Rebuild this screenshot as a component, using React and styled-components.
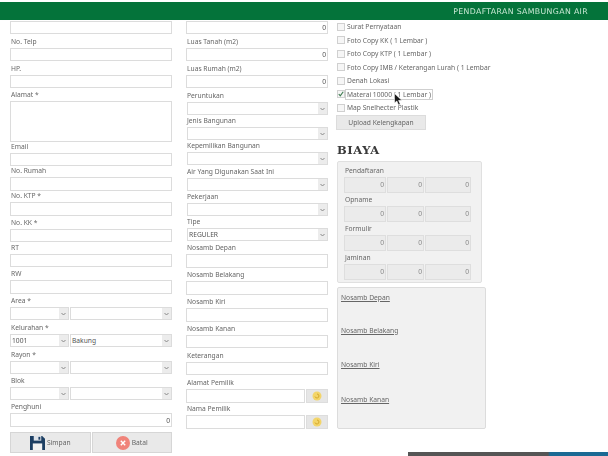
import React from "react";
import styled, { createGlobalStyle } from "styled-components";

const GlobalStyle = createGlobalStyle`
  html, body {
    margin: 0;
    padding: 0;
    background: #fff;
    overflow: hidden;
  }
  body {
    font-family: "Noto Sans", "Liberation Sans", sans-serif;
    font-size: 6.7px;
    color: #666;
  }
`;

const Page = styled.div`
  position: relative;
  width: 608px;
  height: 456px;
  overflow: hidden;
  padding-top: 2px;
  box-sizing: border-box;
  filter: blur(0.45px);
`;
const Header = styled.div`
  display: flex;
  justify-content: flex-end;
  align-items: center;
  height: 18px;
  padding-right: 20px;
  background: #04733a;
  color: #c9e8d4;
  font-family: "DejaVu Sans", sans-serif;
  font-size: 7.8px;
  letter-spacing: 0.35px;
`;
const Columns = styled.div`
  display: grid;
  grid-template-columns: 162px 142px 1fr;
  column-gap: 14px;
  padding-left: 10px;
`;
const FormColumn = styled.div`
  display: flex;
  flex-direction: column;
`;
const RightColumn = styled.div`
  display: flex;
  flex-direction: column;
  margin-left: -6px;
`;
const Field = styled.div`
  display: flex;
  flex-direction: column;
  justify-content: flex-end;
  height: ${(p) => p.$h}px;
`;
const Label = styled.div`
  height: 9px;
  line-height: 9px;
  margin-bottom: 2px;
  padding-left: 1px;
  white-space: nowrap;
`;
const Input = styled.div`
  display: flex;
  align-items: center;
  justify-content: ${(p) => (p.$num ? "flex-end" : "flex-start")};
  height: ${(p) => p.$tall || 13}px;
  box-sizing: border-box;
  padding: 0 1px;
  background: #fff;
  border: 1px solid #dcdcdc;
  color: #555;
`;
const LookupInput = styled(Input)`
  flex: 1;
  height: 14px;
`;
const SelectRow = styled.div`
  display: flex;
  height: 13px;
`;
const Select = styled.div`
  display: flex;
  flex: ${(p) => (p.$w ? `0 0 ${p.$w}px` : "1")};
  margin-left: ${(p) => (p.$w ? 0 : 1)}px;
  box-sizing: border-box;
  border: 1px solid #dcdcdc;
  background: #fff;
`;
const SelectText = styled.div`
  flex: 1;
  padding-left: 1px;
  line-height: 11px;
  color: #555;
`;
const Arrow = styled.div`
  display: flex;
  align-items: center;
  justify-content: center;
  width: 9px;
  background: #ececec;
`;
const LookupRow = styled.div`
  display: flex;
  gap: 1px;
  height: 14px;
`;
const LookupButton = styled.div`
  display: flex;
  align-items: center;
  justify-content: center;
  width: 22px;
  background: #e6e6e6;
  border: 1px solid #ddd;
  box-sizing: border-box;
`;
const ActionBar = styled.div`
  display: flex;
  gap: 1px;
  margin-top: 5px;
  height: 21px;
`;
const ActionButton = styled.div`
  display: flex;
  flex: 1;
  align-items: center;
  justify-content: center;
  gap: 2px;
  box-sizing: border-box;
  background: #e9e9e9;
  border: 1px solid #d6d6d6;
  color: #666;
`;
const CheckRow = styled.div`
  display: flex;
  align-items: center;
  height: 13.5px;
  white-space: nowrap;
`;
const CheckBox = styled.div`
  display: flex;
  align-items: center;
  justify-content: center;
  width: 8px;
  height: 8px;
  margin-left: 1px;
  box-sizing: border-box;
  border: 1px solid #d0d0d0;
  background: #f6f6f6;
`;
const CheckText = styled.span`
  padding: 0 1px;
  border: 1px solid ${(p) => (p.$focus ? "#cfcfcf" : "transparent")};
`;
const UploadButton = styled.div`
  display: flex;
  align-items: center;
  justify-content: center;
  width: 90px;
  height: 15px;
  box-sizing: border-box;
  background: #e9e9e9;
  border: 1px solid #dcdcdc;
`;
const Title = styled.div`
  margin: 13px 0 4px 1px;
  height: 14px;
  line-height: 14px;
  font-family: "DejaVu Serif", "Liberation Serif", serif;
  font-weight: 700;
  font-size: 11.5px;
  letter-spacing: 0.6px;
  color: #3a3a3a;
`;
const CostPanel = styled.div`
  width: 145px;
  height: 122px;
  margin-left: 1px;
  padding: 3px 0 0 6px;
  box-sizing: border-box;
  border: 1px solid #e0e0e0;
  border-radius: 2px;
  background: #f1f1f1;
`;
const CostGroup = styled.div`
  height: ${(p) => p.$h}px;
  display: flex;
  flex-direction: column;
  justify-content: flex-end;
`;
const CostRow = styled.div`
  display: grid;
  grid-template-columns: 42px 37px 46px;
  gap: 1px;
`;
const CostBox = styled.div`
  display: flex;
  align-items: center;
  justify-content: flex-end;
  height: 16px;
  padding-right: 1px;
  box-sizing: border-box;
  border: 1px solid #dedede;
  background: #ebebeb;
  color: #888;
`;
const LinkPanel = styled.div`
  display: flex;
  flex-direction: column;
  width: 149px;
  height: 142px;
  margin: 4px 0 0 1px;
  padding: 5px 0 0 3px;
  box-sizing: border-box;
  border: 1px solid #dcdcdc;
  border-radius: 2px;
  background: #f1f1f1;
`;
const PhotoLink = styled.a`
  height: ${(p) => p.$h}px;
  color: #666;
  text-decoration: underline;
`;
const Cursor = styled.svg`
  position: absolute;
  left: 394px;
  top: 93px;
`;
const Taskbar = styled.div`
  position: absolute;
  right: 0;
  bottom: 0;
  width: 200px;
  height: 4px;
  background: linear-gradient(to right, #555 0, #555 70%, #1b6a94 71%, #1b6a94 100%);
`;

const ArrowIcon = () => (
  <svg width="5" height="4" viewBox="0 0 5 4">
    <path d="M0.5 1 L2.5 3 L4.5 1" fill="none" stroke="#888" strokeWidth="1" />
  </svg>
);

const Dropdown = ({ w, value }) => (
  <Select $w={w}>
    <SelectText>{value}</SelectText>
    <Arrow>
      <ArrowIcon />
    </Arrow>
  </Select>
);

const SearchIcon = () => (
  <svg width="10" height="10" viewBox="0 0 10 10">
    <circle cx="5" cy="5" r="4.5" fill="#f3d56a" />
    <path d="M3 5.5 A2 2 0 1 0 5 3" fill="none" stroke="#d6a92c" strokeWidth="1" />
  </svg>
);

const SaveIcon = () => (
  <svg width="15" height="15" viewBox="0 0 16 16">
    <path d="M0 1 H13 L16 4 V16 H0 Z" fill="#1d3f63" />
    <rect x="4" y="1" width="8" height="5" fill="#dfe4ea" />
    <rect x="9" y="2" width="2" height="3" fill="#1d3f63" />
    <rect x="3" y="9" width="10" height="7" fill="#f2f2f2" />
  </svg>
);

const CancelIcon = () => (
  <svg width="14" height="14" viewBox="0 0 14 14">
    <circle cx="7" cy="7" r="7" fill="#f0837a" />
    <path d="M4.8 4.8 L9.2 9.2 M9.2 4.8 L4.8 9.2" stroke="#fff" strokeWidth="1.4" />
  </svg>
);

const leftFields = [
  { label: "No. Telp", h: 27 },
  { label: "HP.", h: 27 },
  { label: "Alamat *", h: 54, tall: 41 },
  { label: "Email", h: 24 },
  { label: "No. Rumah", h: 25, tall: 14 },
  { label: "No. KTP *", h: 25, tall: 14 },
  { label: "No. KK *", h: 26 },
  { label: "RT", h: 25 },
  { label: "RW", h: 27, tall: 14 },
];

const leftSelects = [
  { label: "Area *", h: 26 },
  { label: "Kelurahan *", h: 27, code: "1001", name: "Bakung" },
  { label: "Rayon *", h: 27 },
  { label: "Blok", h: 26 },
];

const midTop = [
  { label: "Luas Tanah (m2)", h: 27 },
  { label: "Luas Rumah (m2)", h: 27 },
];

const midSelects = [
  { label: "Peruntukan", h: 27 },
  { label: "Jenis Bangunan", h: 25 },
  { label: "Kepemilikan Bangunan", h: 25 },
  { label: "Air Yang Digunakan Saat Ini", h: 26 },
  { label: "Pekerjaan", h: 25 },
  { label: "Tipe", h: 25, value: "REGULER" },
];

const midInputs = [
  { label: "Nosamb Depan", h: 27, tall: 14 },
  { label: "Nosamb Belakang", h: 27, tall: 14 },
  { label: "Nosamb Kiri", h: 27, tall: 14 },
  { label: "Nosamb Kanan", h: 26 },
  { label: "Keterangan", h: 27 },
];

const checks = [
  "Surat Pernyataan",
  "Foto Copy KK ( 1 Lembar )",
  "Foto Copy KTP ( 1 Lembar )",
  "Foto Copy IMB / Keterangan Lurah ( 1 Lembar",
  "Denah Lokasi",
  "Materai 10000 ( 1 Lembar )",
  "Map Snelhecter Plastik",
];

const costs = [
  { label: "Pendaftaran", h: 28 },
  { label: "Opname", h: 29 },
  { label: "Formulir", h: 29 },
  { label: "Jaminan", h: 29 },
];

const links = [
  { label: "Nosamb Depan", h: 33 },
  { label: "Nosamb Belakang", h: 34 },
  { label: "Nosamb Kiri", h: 35 },
  { label: "Nosamb Kanan", h: 30 },
];

export default function App() {
  return (
    <Page>
      <GlobalStyle />
      <Header>PENDAFTARAN SAMBUNGAN AIR</Header>
      <Columns>
        <FormColumn>
          <Field $h={14}>
            <Input />
          </Field>
          {leftFields.map((f) => (
            <Field key={f.label} $h={f.h}>
              <Label>{f.label}</Label>
              <Input $tall={f.tall} />
            </Field>
          ))}
          {leftSelects.map((f) => (
            <Field key={f.label} $h={f.h}>
              <Label>{f.label}</Label>
              <SelectRow>
                <Dropdown w={59} value={f.code} />
                <Dropdown value={f.name} />
              </SelectRow>
            </Field>
          ))}
          <Field $h={27}>
            <Label>Penghuni</Label>
            <Input $num $tall={14}>0</Input>
          </Field>
          <ActionBar>
            <ActionButton>
              <SaveIcon />
              Simpan
            </ActionButton>
            <ActionButton>
              <CancelIcon />
              Batal
            </ActionButton>
          </ActionBar>
        </FormColumn>

        <FormColumn>
          <Field $h={14}>
            <Input $num>0</Input>
          </Field>
          {midTop.map((f) => (
            <Field key={f.label} $h={f.h}>
              <Label>{f.label}</Label>
              <Input $num>0</Input>
            </Field>
          ))}
          {midSelects.map((f) => (
            <Field key={f.label} $h={f.h}>
              <Label>{f.label}</Label>
              <SelectRow>
                <Dropdown value={f.value} />
              </SelectRow>
            </Field>
          ))}
          {midInputs.map((f) => (
            <Field key={f.label} $h={f.h}>
              <Label>{f.label}</Label>
              <Input $tall={f.tall} />
            </Field>
          ))}
          {["Alamat Pemilik", "Nama Pemilik"].map((label, i) => (
            <Field key={label} $h={i === 0 ? 28 : 26}>
              <Label>{label}</Label>
              <LookupRow>
                <LookupInput />
                <LookupButton>
                  <SearchIcon />
                </LookupButton>
              </LookupRow>
            </Field>
          ))}
        </FormColumn>

        <RightColumn>
          {checks.map((c, i) => (
            <CheckRow key={c}>
              <CheckBox>
                {i === 5 && (
                  <svg width="8" height="8" viewBox="0 0 8 8">
                    <path d="M1 4 L3 6.5 L7 1" fill="none" stroke="#3c7a4f" strokeWidth="1.5" />
                  </svg>
                )}
              </CheckBox>
              <CheckText $focus={i === 5}>{c}</CheckText>
            </CheckRow>
          ))}
          <UploadButton>Upload Kelengkapan</UploadButton>
          <Title>BIAYA</Title>
          <CostPanel>
            {costs.map((c) => (
              <CostGroup key={c.label} $h={c.h}>
                <Label>{c.label}</Label>
                <CostRow>
                  <CostBox>0</CostBox>
                  <CostBox>0</CostBox>
                  <CostBox>0</CostBox>
                </CostRow>
              </CostGroup>
            ))}
          </CostPanel>
          <LinkPanel>
            {links.map((l) => (
              <PhotoLink key={l.label} $h={l.h}>
                {l.label}
              </PhotoLink>
            ))}
          </LinkPanel>
        </RightColumn>
      </Columns>
      <Cursor width="9" height="13" viewBox="0 0 9 13">
        <path d="M0.5 0.5 L0.5 10 L2.8 8 L4.5 12 L6.3 11.2 L4.6 7.5 L7.8 7.3 Z" fill="#1c1c1c" stroke="#fff" strokeWidth="0.6" />
      </Cursor>
      <Taskbar />
    </Page>
  );
}
